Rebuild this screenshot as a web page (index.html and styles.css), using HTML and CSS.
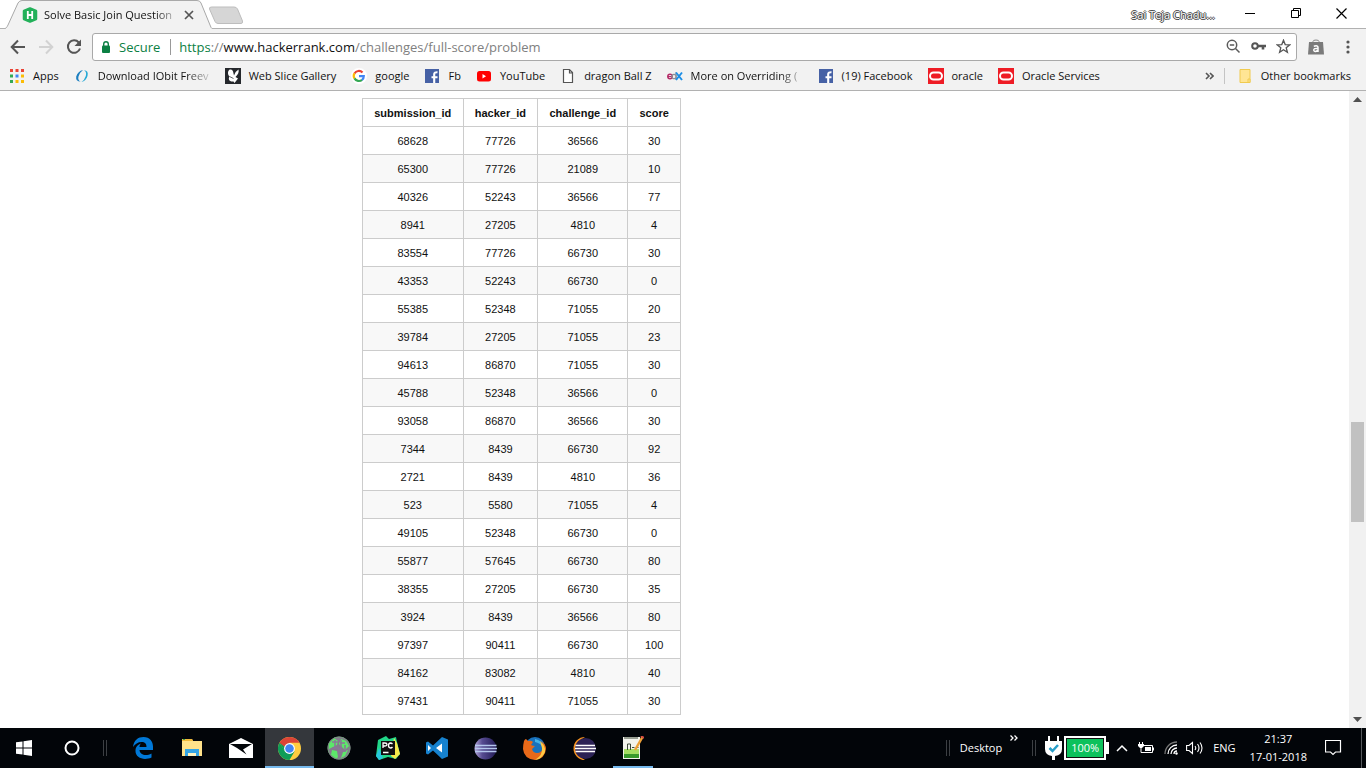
FILE: index.html
```html
<!DOCTYPE html>
<html lang="en">
<head>
<meta charset="utf-8">
<meta name="viewport" content="width=device-width, initial-scale=1">
<title>Solve Basic Join Questions</title>
<link rel="stylesheet" href="styles.css">
</head>
<body>
<header class="browser">
  <div class="tabstrip">
    <div class="tab">
      <svg class="tab-shape" viewBox="0 0 207 29"><path d="M0 28.500C1.500 28 2 27 3 25L13 3Q14.500 .5 17 .5H192Q195 .5 196 3L205 25Q206 28 207 28.500V29H0Z" fill="#f2f2f2"/><path d="M0 28.500C1.500 28 2 27 3 25L13 3Q14.500 .5 17 .5H192Q195 .5 196 3L205 25Q206 28 207 28.500" fill="none" stroke="#a9a9a9"/></svg>
      <svg class="tab-icon" viewBox="0 0 16 16"><path d="M8 1.500 14 4V12L8 14.500 2 12V4Z" fill="#23b15a" stroke="#23b15a" stroke-width="2.500" stroke-linejoin="round"/><path d="M5.800 4v8M10.200 4v8M5.800 8h4.400" stroke="#fff" stroke-width="1.800" fill="none"/></svg>
      <span class="tab-title">Solve Basic Join Question</span>
      <button class="tab-close" aria-label="Close tab"><svg width="10" height="10" viewBox="0 0 10 10"><path d="M1 1l8 8M9 1l-8 8" stroke="#555" stroke-width="1.700"/></svg></button>
    </div>
    <button class="newtab" aria-label="New tab"><svg width="36" height="19" viewBox="0 0 36 19"><path d="M3.500 1H26Q28.500 1 29.500 3L34.500 15Q35 17.500 33 17.500H10Q8 17.500 7 15.500L1.500 3Q1 1 3.500 1Z" fill="#d6d6d6" stroke="#bdbdbd"/></svg></button>
    <span class="user">Sai Teja Chadu...</span>
    <div class="winbtns">
      <button aria-label="Minimize"><svg width="10" height="10" viewBox="0 0 10 10"><path d="M0 5.500h10" stroke="#000"/></svg></button>
      <button aria-label="Restore"><svg width="10" height="10" viewBox="0 0 10 10"><path d="M.5 2.500h7v7h-7zM2.500 2V.5h7v7H8" fill="none" stroke="#000"/></svg></button>
      <button aria-label="Close"><svg width="11" height="11" viewBox="0 0 11 11"><path d="M.5.5l10 10M10.500.5l-10 10" stroke="#000" stroke-width="1.200"/></svg></button>
    </div>
  </div>
  <div class="toolbar">
    <button class="nav" aria-label="Back"><svg width="16" height="16" viewBox="0 0 16 16"><path d="M15 8H2.500M8 1.500 1.700 8 8 14.500" fill="none" stroke="#555" stroke-width="2"/></svg></button>
    <button class="nav" aria-label="Forward"><svg width="16" height="16" viewBox="0 0 16 16"><path d="M1 8h12.500M8 1.500 14.300 8 8 14.500" fill="none" stroke="#d2d2d2" stroke-width="2"/></svg></button>
    <button class="nav" aria-label="Reload"><svg width="16" height="16" viewBox="0 0 16 16"><path d="M12.800 3.500A6.200 6.200 0 1 0 14 9.500" fill="none" stroke="#555" stroke-width="2"/><path d="M15 .5V7H8.500Z" fill="#555"/></svg></button>
    <div class="omnibox">
      <svg width="10" height="12" viewBox="0 0 10 12"><rect x="1" y="4.500" width="8" height="7.500" rx="1" fill="#0b8043"/><path d="M2.700 5V3a2.300 2.300 0 0 1 4.600 0v2" fill="none" stroke="#0b8043" stroke-width="1.400"/></svg>
      <span class="secure">Secure</span>
      <div class="url" role="textbox" aria-label="Address" tabindex="0"><span class="scheme">https</span><span class="dim">://</span>www.hackerrank.com<span class="dim">/challenges/full-score/problem</span></div>
      <button aria-label="Zoom"><svg width="15" height="15" viewBox="0 0 15 15"><circle cx="6" cy="6" r="4.700" fill="none" stroke="#5a5a5a" stroke-width="1.500"/><path d="M9.500 9.500l4 4M3.800 6h4.400" stroke="#5a5a5a" stroke-width="1.500"/></svg></button>
      <button aria-label="Saved password"><svg width="15" height="15" viewBox="0 0 15 15"><circle cx="4" cy="7" r="2.800" fill="none" stroke="#555" stroke-width="2"/><path d="M6.500 7H15M12 7v3.500" stroke="#555" stroke-width="2.600"/></svg></button>
      <button aria-label="Bookmark"><svg width="15" height="15" viewBox="0 0 15 15"><path d="M7.500 1.200l1.700 4.400 4.600.2-3.600 2.900 1.200 4.600-3.900-2.600-3.900 2.600 1.200-4.600L1.200 5.800l4.600-.2z" fill="none" stroke="#555" stroke-width="1.300"/></svg></button>
    </div>
    <button class="ext" aria-label="Shopping assistant"><svg width="16" height="16" viewBox="0 0 16 16"><path d="M5 4V2.500Q5 1 8 1t3 1.500V4" fill="none" stroke="#888"/><path d="M1 3h14l1 12.500H0Z" fill="#7b7b7b"/><path d="M5.800 7.200Q10 6 10 8.500V13M10 9.500Q5.500 9 5.800 11.200 6.500 13.500 10 11.500" fill="none" stroke="#fff" stroke-width="1.500"/></svg></button>
    <button class="menu" aria-label="Menu"><svg width="4" height="14" viewBox="0 0 4 14" fill="#555"><circle cx="2" cy="2" r="1.600"/><circle cx="2" cy="7" r="1.600"/><circle cx="2" cy="12" r="1.600"/></svg></button>
  </div>
  <nav class="bookmarks">
    <a href="#apps"><svg viewBox="0 0 16 16"><path d="M1 1h3v3H1zM6.500 1h3v3h-3zM12 1h3v3h-3z" fill="#ea4335"/><path d="M1 6.500h3v3H1z" fill="#34a853"/><path d="M6.500 6.500h3v3h-3z" fill="#4285f4"/><path d="M12 6.500h3v3h-3zM6.500 12h3v3h-3zM12 12h3v3h-3z" fill="#fbbc05"/><path d="M1 12h3v3H1z" fill="#34a853"/></svg>Apps</a>
    <a href="#iobit"><svg viewBox="0 0 16 16"><path d="M9 2Q4 3 2.200 8.500 1.500 13.500 6.500 13.500 3.500 12 4.500 8.500 6 4 9 2Z" fill="#1d7fc0"/><path d="M7.500 14Q12 13 13.500 8 14.800 2.500 10 2.300 13 3.800 11.800 8 10.500 12 7.500 14Z" fill="#26a9d5"/></svg><span class="fade">Download IObit Freev</span></a>
    <a href="#slice"><svg viewBox="0 0 16 16"><path fill="#25282c" d="M0 0h16v16H0z"/><path d="M8.500 13.500C4 14 3 11 4.500 8.500 2 6 3 2 5 1.500q3-.5 3.500 4l.5 2q1-4 4.500-6Q14.500 5 10.500 9l2.500 1.500L9.500 15z" fill="#fff"/><path d="M4.500 8.500l4 2" stroke="#25282c" stroke-width=".7"/></svg>Web Slice Gallery</a>
    <a href="#google"><svg viewBox="0 0 16 16"><circle cx="8" cy="8" r="8" fill="#fff"/><path d="M3.500 5.500A5 5 0 0 1 11.500 4.500" stroke="#ea4335" stroke-width="2.200" fill="none"/><path d="M3.500 5.300a5 5 0 0 0 0 5.200" stroke="#fbbc05" stroke-width="2.200" fill="none"/><path d="M3.500 10.400a5 5 0 0 0 7.600 1.400" stroke="#34a853" stroke-width="2.200" fill="none"/><path d="M11 12a5 5 0 0 0 1.800-3.900H8" stroke="#4285f4" stroke-width="2.200" fill="none"/></svg>google</a>
    <a href="#fb"><svg viewBox="0 0 16 16"><path fill="#4661a5" d="M1 1h14v14H1z"/><path d="M10.200 15V8M7.500 9.200h6M10.200 9V6q0-2 3.300-1.800" fill="none" stroke="#fff" stroke-width="2.100"/></svg>Fb</a>
    <a href="#youtube"><svg viewBox="0 0 16 16"><rect x="1" y="3" width="14" height="10.500" rx="2.500" fill="#f00"/><path d="M6.500 6v4.500L10 8.200z" fill="#fff"/></svg>YouTube</a>
    <a href="#ball"><svg viewBox="0 0 16 16"><path d="M3.500 1.500h6l3 3v10h-9zM9.500 1.500v3.500h3" fill="#fff" stroke="#555" stroke-width="1.200"/></svg>dragon Ball Z</a>
    <a href="#edx"><svg viewBox="0 0 16 16"><circle cx="3" cy="8.500" r="2.200" fill="none" stroke="#b52a67" stroke-width="1.500"/><path d="M1 8.500h4" stroke="#b52a67"/><circle cx="7" cy="8.500" r="2.200" fill="none" stroke="#8d8f95" stroke-width="1.300"/><path d="M9 4v7.500" stroke="#8d8f95"/><path d="M9 4.500l6 7.500M15 4.500L9 12" stroke="#1c8ee6" stroke-width="2"/></svg><span class="fade">More on Overriding (</span></a>
    <a href="#facebook"><svg viewBox="0 0 16 16"><path fill="#4661a5" d="M1 1h14v14H1z"/><path d="M10.200 15V8M7.500 9.200h6M10.200 9V6q0-2 3.300-1.800" fill="none" stroke="#fff" stroke-width="2.100"/></svg>(19) Facebook</a>
    <a href="#oracle"><svg viewBox="0 0 16 16"><path fill="#ee1c25" d="M0 0h16v16H0z"/><rect x="2" y="4.500" width="12" height="7" rx="3.500" fill="none" stroke="#fff" stroke-width="2"/></svg>oracle</a>
    <a href="#services"><svg viewBox="0 0 16 16"><path fill="#ee1c25" d="M0 0h16v16H0z"/><rect x="2" y="4.500" width="12" height="7" rx="3.500" fill="none" stroke="#fff" stroke-width="2"/></svg>Oracle Services</a>
    <button class="overflow" aria-label="More bookmarks"><svg width="9" height="8" viewBox="0 0 9 8"><path d="M1 1l3 3-3 3M5 1l3 3-3 3" fill="none" stroke="#555" stroke-width="1.600"/></svg></button>
    <a class="other" href="#other"><svg viewBox="0 0 16 16"><path d="M3 1.500h10v13H3z" fill="#ffe594" stroke="#f0ca4e"/><path d="M11 14.500V11h2v3.500z" fill="#ffe594" stroke="#f0ca4e"/></svg>Other bookmarks</a>
  </nav>
</header>
<div class="view">
  <main class="page">
    <table class="scores">
      <thead><tr><th scope="col">submission_id</th><th scope="col">hacker_id</th><th scope="col">challenge_id</th><th scope="col">score</th></tr></thead>
      <tbody>
        <tr><td>68628</td><td>77726</td><td>36566</td><td>30</td></tr>
        <tr><td>65300</td><td>77726</td><td>21089</td><td>10</td></tr>
        <tr><td>40326</td><td>52243</td><td>36566</td><td>77</td></tr>
        <tr><td>8941</td><td>27205</td><td>4810</td><td>4</td></tr>
        <tr><td>83554</td><td>77726</td><td>66730</td><td>30</td></tr>
        <tr><td>43353</td><td>52243</td><td>66730</td><td>0</td></tr>
        <tr><td>55385</td><td>52348</td><td>71055</td><td>20</td></tr>
        <tr><td>39784</td><td>27205</td><td>71055</td><td>23</td></tr>
        <tr><td>94613</td><td>86870</td><td>71055</td><td>30</td></tr>
        <tr><td>45788</td><td>52348</td><td>36566</td><td>0</td></tr>
        <tr><td>93058</td><td>86870</td><td>36566</td><td>30</td></tr>
        <tr><td>7344</td><td>8439</td><td>66730</td><td>92</td></tr>
        <tr><td>2721</td><td>8439</td><td>4810</td><td>36</td></tr>
        <tr><td>523</td><td>5580</td><td>71055</td><td>4</td></tr>
        <tr><td>49105</td><td>52348</td><td>66730</td><td>0</td></tr>
        <tr><td>55877</td><td>57645</td><td>66730</td><td>80</td></tr>
        <tr><td>38355</td><td>27205</td><td>66730</td><td>35</td></tr>
        <tr><td>3924</td><td>8439</td><td>36566</td><td>80</td></tr>
        <tr><td>97397</td><td>90411</td><td>66730</td><td>100</td></tr>
        <tr><td>84162</td><td>83082</td><td>4810</td><td>40</td></tr>
        <tr><td>97431</td><td>90411</td><td>71055</td><td>30</td></tr>
      </tbody>
    </table>
  </main>
  <div class="scrollbar">
    <svg width="9" height="5" viewBox="0 0 9 5"><path d="M4.500 0L9 5H0z" fill="#505050"/></svg>
    <div class="track"><div class="thumb"></div></div>
    <svg width="9" height="5" viewBox="0 0 9 5"><path d="M4.500 5L9 0H0z" fill="#505050"/></svg>
  </div>
</div>
<footer class="taskbar">
  <button class="sys" aria-label="Start"><svg width="16" height="16" viewBox="0 0 16 16"><path d="M0 2.300L6.500 1.400V7.500H0zM7.500 1.200L16 0V7.500H7.500zM0 8.500H6.500V14.600L0 13.700zM7.500 8.500H16V16L7.500 14.800z" fill="#fff"/></svg></button>
  <button class="sys" aria-label="Cortana"><svg width="16" height="16" viewBox="0 0 16 16"><circle cx="8" cy="8" r="6.500" fill="none" stroke="#fff" stroke-width="2"/></svg></button>
  <span class="grip first"></span>
  <button class="app" aria-label="Edge"><svg width="22" height="22" viewBox="0 0 22 22"><path d="M1 10C2 3 6 0 11.500 0 18 0 21 5 21 9.500V13H7.500C8 18 14 19.500 19.500 16.500V20.500C12 24 3 21 3.500 13.500 3.500 10 6 7.500 9 6.500 8 7.500 7.600 8.500 7.500 10H14.500C14.500 6.500 13 5 9.500 5 6 5 3 7 1 10Z" fill="#0078d7"/></svg></button>
  <button class="app" aria-label="File Explorer"><svg width="22" height="20" viewBox="0 0 22 20"><path d="M1 1h10l1 2h9v15H1z" fill="#ffe28a"/><path d="M1 1h10l1 2H1z" fill="#f0b93a"/><path d="M2 1h2v1H2z" fill="#3aa655"/><path d="M4 18v-7h14v7h-3v-3H7v3z" fill="#35a5e5"/><path d="M7 15h8v3H7z" fill="#fff3bf"/></svg></button>
  <button class="app" aria-label="Mail"><svg width="24" height="20" viewBox="0 0 24 20"><path d="M0 6L12 0l12 6v14H0z" fill="#fff"/><path d="M1 6l22 0-9 5.500 3.500 5L8 10z" fill="#020509"/></svg></button>
  <button class="app active" aria-label="Chrome"><svg width="23" height="23" viewBox="0 0 22 22"><circle cx="11" cy="11" r="11" fill="#ffcd40"/><path d="M1.470 5.500A11 11 0 0 0 11 22l4.800-8.200L11 11 6.500 13.500z" fill="#0f9d58"/><path d="M1.470 5.500L6.300 13.700 11 11V5.500z" fill="#0f9d58"/><path d="M1.470 5.500A11 11 0 0 1 20.530 5.500H11L6 9z" fill="#db4437"/><circle cx="11" cy="11" r="5.200" fill="#fff"/><circle cx="11" cy="11" r="4.100" fill="#4285f4"/></svg></button>
  <button class="app" aria-label="Web tool"><svg width="24" height="24" viewBox="0 0 24 24"><circle cx="12" cy="12" r="11.500" fill="#857a8e"/><path d="M2 7l5-5 4 3-1 4-4 2-4 2zM14 3l5 2 3 5-4 4-3-3-3-3zM5 14l5 1 1 6-2 2-5-4zM16 16l5-2-3 6-4 2z" fill="#5ce86a"/><path d="M5 6h6M8 4v9M13 7h5M14 4v12M5 12h7M10 15h7M12 12v8M18 9v7" stroke="#8b7798" stroke-width="1.500"/><circle cx="12" cy="12" r="11" fill="none" stroke="#729b7b"/></svg></button>
  <button class="app" aria-label="PyCharm"><svg width="24" height="24" viewBox="0 0 24 24"><path d="M2 4l8-4 3 3 7-2 1 5 3 12-4 5-8-2-9 3L0 20z" fill="#21d789"/><path d="M18 2l3 5 3 11-5 5-4-3z" fill="#f5e94a"/><path d="M0 20l3-8 4 10-4 2z" fill="#27c7dc"/><path d="M5 5h14v14H5z" fill="#101010"/><path d="M7 12V7h2q2 0 2 1.500T9 10H7M16.500 8q-1-1-2-1Q12.500 7.200 12.500 9.500T14.500 12q1.200 0 2-1M7 16.500h5.500" fill="none" stroke="#fff" stroke-width="1.300"/></svg></button>
  <button class="app" aria-label="Visual Studio Code"><svg width="24" height="24" viewBox="0 0 24 24"><path d="M17 1l6 2.500v17L17 23 8 14.500 3 18.500 1 17.500V6.500L3 5.500 8 9.500z" fill="#1682cf"/><path d="M17 7.500v9L11 12zM3 9v6l3-3z" fill="#fff"/></svg></button>
  <button class="app" aria-label="Eclipse"><svg width="23" height="23" viewBox="0 0 23 23"><defs><linearGradient id="ecl"><stop offset="0" stop-color="#b3a6d8"/><stop offset=".35" stop-color="#564b91"/><stop offset="1" stop-color="#211a54"/></linearGradient></defs><circle cx="11.500" cy="11.500" r="11" fill="url(#ecl)"/><path d="M1 8.500h21.500M1 11.500h22M1 14.500h21.500" stroke="#b5c7ed" stroke-width="1.300"/></svg></button>
  <button class="app" aria-label="Firefox"><svg width="23" height="23" viewBox="0 0 23 23"><circle cx="12" cy="10" r="10" fill="#1972bd"/><path d="M12 2q7 1 8 8-3-4-8-5z" fill="#45b3e7"/><path d="M1 4q1-2 2-2l2 2q3-1 5 1L8 8q2 1 4 1l-3 3q1 4 5 4 5 0 6-6 0-4-2-6 5 3 5 8-1 10-11 11Q1 22 0 12q0-4 1-8z" fill="#e86919"/><path d="M17 4q6 5 5 11-3 7-10 8 8-5 7-12z" fill="#ffc943"/></svg></button>
  <button class="app" aria-label="Eclipse IDE"><svg width="24" height="23" viewBox="0 0 24 23"><path d="M13 0A11.500 11.500 0 0 0 13 23 13 13 0 0 1 13 0" fill="#f79320"/><circle cx="13.500" cy="11.500" r="10.500" fill="#2c2255"/><path d="M3.500 8.500H23M3 11.500h21M3.500 14.500H23" stroke="#fff" stroke-width="1.600"/></svg></button>
  <button class="app running" aria-label="Notepad++"><svg width="22" height="24" viewBox="0 0 22 24"><path d="M1 1h17v22H1z" fill="#f3f3ec"/><path d="M2 13h15v7H2z" fill="#a5de62"/><path d="M2 18h15v4H2z" fill="#399a2b"/><path d="M2 2h14M5.500 8v6M8.500 14V8h-3M10 11.500h2.500M14 11.500h2.500" stroke="#3d4938" fill="none"/><path d="M20.500 1L13 14" stroke="#eda036" stroke-width="2.500"/><path d="M19 0l3 2" stroke="#d44b42" stroke-width="2"/></svg></button>
  <div class="tray">
    <span class="grip"></span>
    <button class="desktop">Desktop</button>
    <button class="more-tools" aria-label="More toolbars"><svg width="8" height="6" viewBox="0 0 8 6"><path d="M.5.5L3 3 .5 5.500M4.500.5L7 3 4.500 5.500" fill="none" stroke="#fff" stroke-width="1.300"/></svg></button>
    <span class="grip"></span>
    <div class="power">
      <svg width="17" height="24" viewBox="0 0 17 24"><path d="M3 0h2v5h7V0h2v5h3v8q0 6-7 7v4H7v-4q-7-1-7-7V5h3z" fill="#fff"/><path d="M4.500 12l3 3 5.500-6" fill="none" stroke="#279fc9" stroke-width="2.500"/></svg>
      <span class="battery">100%</span>
    </div>
    <button aria-label="Show hidden icons"><svg width="12" height="8" viewBox="0 0 12 8"><path d="M1 7l5-5 5 5" fill="none" stroke="#fff" stroke-width="1.500"/></svg></button>
    <button aria-label="Battery"><svg width="16" height="13" viewBox="0 0 16 13"><path d="M5 3.500h9.500v7H6.500" fill="none" stroke="#fff"/><path d="M7 5h6v4H7zM15 5.500h1v3h-1z" fill="#fff"/><path d="M1.500 0v2M4.500 0v2" stroke="#fff"/><path d="M0 2h6v2L4 6H2L0 4z" fill="#fff"/><path d="M3 6v4.500h4" fill="none" stroke="#fff"/></svg></button>
    <button aria-label="Network"><svg width="14" height="14" viewBox="0 0 14 14"><path d="M1 13A12 12 0 0 1 13 1" fill="none" stroke="#777" stroke-width="1.300"/><path d="M4 13a9 9 0 0 1 9-9M7 13a6 6 0 0 1 6-6M10 13a3 3 0 0 1 3-3" fill="none" stroke="#fff" stroke-width="1.300"/><circle cx="12.500" cy="12.500" r="1.200" fill="#fff"/></svg></button>
    <button class="volume" aria-label="Volume"><svg width="17" height="14" viewBox="0 0 17 14"><path d="M.6 4.500H3L6.500 1.500v11L3 9.500H.6zM9 5q1.500 2 0 4M11.500 3q3 4 0 8M14 1.500q4 5.500 0 11" fill="none" stroke="#fff" stroke-width="1.100"/></svg></button>
    <button class="lang">ENG</button>
    <button class="clock"><span>21:37</span><span>17-01-2018</span></button>
    <button class="notify" aria-label="Notifications"><svg width="17" height="16" viewBox="0 0 17 16"><path d="M.5.5h15v11.500h-5L8 14.500 5.500 12h-5z" fill="none" stroke="#fff" stroke-width="1.200"/></svg></button>
    <span class="peek"></span>
  </div>
</footer>
</body>
</html>
```
FILE: styles.css
```css
* { box-sizing: border-box; }
body {
  margin: 0;
  height: 100vh;
  display: flex;
  flex-direction: column;
  overflow: hidden;
  background: #fff;
  color: #111;
  font: 11px/16px "Open Sans", "Noto Sans", sans-serif;
}
button {
  display: flex;
  align-items: center;
  justify-content: center;
  padding: 0;
  border: 0;
  background: none;
  color: inherit;
  font: inherit;
}
svg { display: block; flex: none; }
a { color: inherit; text-decoration: none; }

.browser { flex: none; background: #f2f2f2; border-bottom: 1px solid #b1b1b1; }
.tabstrip {
  display: flex;
  height: 29px;
  padding-left: 5px;
  background: #fff;
  box-shadow: inset 0 -1px #b1b1b1;
}
.tab {
  position: relative;
  display: flex;
  align-items: center;
  width: 207px;
  padding-left: 17px;
}
.tab-shape { position: absolute; left: 0; top: 0; width: 207px; height: 29px; }
.tab-icon, .tab-title, .tab-close { position: relative; }
.tab-icon { width: 16px; height: 16px; }
.tab-title {
  width: 132px;
  margin: 0 8px 0 6px;
  white-space: nowrap;
  -webkit-mask-image: linear-gradient(to right, #000 112px, transparent 136px);
  mask-image: linear-gradient(to right, #000 112px, transparent 136px);
}
.newtab { align-self: flex-start; margin: 6px 0 0 -4px; }
.user {
  margin-left: auto;
  align-self: center;
  color: #fff;
  text-shadow: 1px 0 #444, -1px 0 #444, 0 1px #444, 0 -1px #444;
}
.winbtns { display: flex; width: 139px; margin-left: 12px; padding: 0 2px 3px 0; }
.winbtns button { flex: 1; }

.toolbar { display: flex; align-items: center; height: 35px; padding: 3px 16px 3px 10px; }
.nav { width: 16px; margin-right: 12px; }
.nav:nth-child(3) { margin-right: 10px; }
.omnibox {
  display: flex;
  flex: 1;
  align-items: center;
  height: 28px;
  padding: 0 5px 0 8px;
  background: #fff;
  border: 1px solid #a9a9a9;
  border-radius: 3px;
  font-size: 13px;
  line-height: 20px;
}
.omnibox button { width: 15px; margin-left: 10px; }
.secure {
  margin-left: 8px;
  padding-right: 10px;
  color: #0b8043;
  line-height: 16px;
  border-right: 1px solid #999;
}
.url { flex: 1; margin-left: 8px; white-space: nowrap; }
.scheme { color: #0b8043; }
.dim { color: #808080; }
.ext { margin-left: 11px; }
.menu { margin-left: 22px; }

.bookmarks {
  display: flex;
  align-items: center;
  gap: 15px;
  height: 26px;
  padding: 0 15px 2px 9px;
  white-space: nowrap;
}
.bookmarks a { display: flex; align-items: center; gap: 8px; }
.bookmarks a svg { width: 16px; height: 16px; }
.fade {
  min-width: 112px;
  -webkit-mask-image: linear-gradient(to right, #000 88px, transparent 116px);
  mask-image: linear-gradient(to right, #000 88px, transparent 116px);
}
.overflow { margin-left: auto; }
.bookmarks .other { padding-left: 12px; margin-left: -5px; border-left: 1px solid #c4c4c4; }

.view { display: flex; flex: 1; min-height: 0; }
.page { flex: 1; overflow: hidden; padding: 7px 0 0 362px; }
.scores {
  width: 319px;
  border-collapse: collapse;
  font: 11px/15px "Liberation Sans", Arial, sans-serif;
  text-align: center;
}
.scores th, .scores td { height: 28px; padding: 7px 11px 5px; border: 1px solid #ccc; }
.scores tbody tr:nth-child(even) { background: #f8f8f8; }
.scrollbar {
  display: flex;
  flex-direction: column;
  align-items: center;
  width: 17px;
  padding: 6px 0;
  background: #f1f1f1;
}
.track { flex: 1; width: 13px; }
.track::before { content: ""; display: block; height: 52%; }
.thumb { height: 100px; background: #c1c1c1; }

.taskbar { display: flex; flex: none; height: 40px; background: #020509; color: #fff; }
.sys { width: 48px; }
.grip { width: 4px; height: 16px; align-self: center; border: solid #3c3f43; border-width: 0 1px; }
.first { margin: 0 11px 0 7px; }
.app { width: 49px; }
.active { background: #34373c; box-shadow: inset 0 -2px #76b9ed; }
.running { background: linear-gradient(#76b9ed, #76b9ed) center bottom / 40px 2px no-repeat; }
.tray { display: flex; align-items: center; margin-left: auto; }
.tray button { margin-left: 10px; }
.tray .more-tools { align-self: flex-start; margin: 7px 14px 0 8px; }
.power { display: flex; align-items: center; gap: 2px; margin-left: 9px; }
.battery {
  position: relative;
  width: 42px;
  border: 2px solid #fff;
  outline: 1px solid #111;
  outline-offset: -3px;
  background: #0dc15c;
  line-height: 20px;
  text-align: center;
}
.battery::after { content: ""; position: absolute; right: -5px; top: 4px; width: 3px; height: 12px; background: #fff; }
.tray .volume { margin-left: 8px; }
.tray .clock { flex-direction: column; margin-left: 14px; line-height: 18px; }
.tray .notify { margin-left: 18px; }
.peek { align-self: stretch; width: 5px; margin-left: 19px; border-left: 1px solid #55585c; }
```
